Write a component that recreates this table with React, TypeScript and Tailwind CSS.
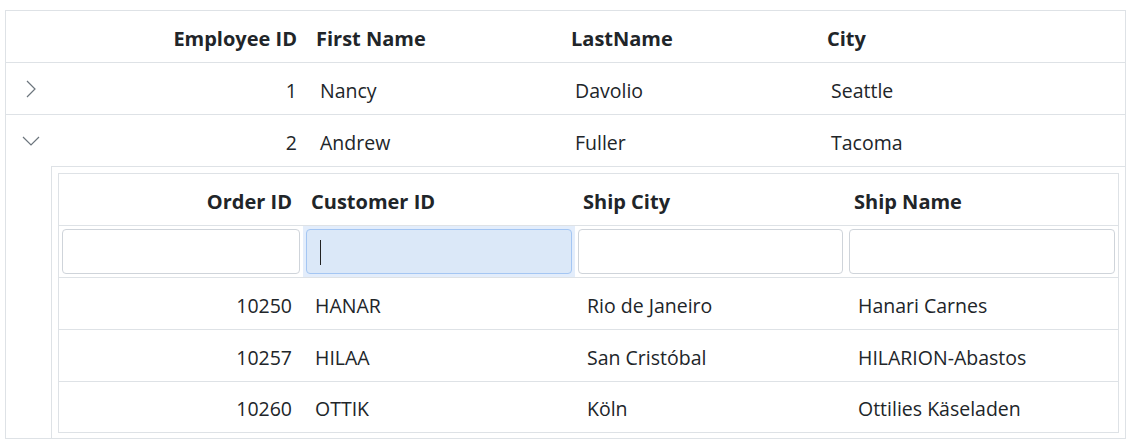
import { ReactNode } from 'react';

const employees = [
  { id: 1, first: 'Nancy', last: 'Davolio', city: 'Seattle', open: false },
  { id: 2, first: 'Andrew', last: 'Fuller', city: 'Tacoma', open: true },
];

const orders = [
  { id: 10250, customer: 'HANAR', city: 'Rio de Janeiro', name: 'Hanari Carnes' },
  { id: 10257, customer: 'HILAA', city: 'San Cristóbal', name: 'HILARION-Abastos' },
  { id: 10260, customer: 'OTTIK', city: 'Köln', name: 'Ottilies Käseladen' },
];

const outerCols = 'grid grid-cols-[45px_257px_255px_256px_1fr]';
const innerCols = 'grid grid-cols-[244px_272px_271px_1fr]';

function Chevron({ open }: { open: boolean }) {
  return open ? (
    <svg width="18" height="10" viewBox="0 0 18 10" className="text-[#6c757d]">
      <path d="M1 1 L9 9 L17 1" fill="none" stroke="currentColor" strokeWidth="1.2" />
    </svg>
  ) : (
    <svg width="10" height="18" viewBox="0 0 10 18" className="text-[#6c757d]">
      <path d="M1 1 L9 9 L1 17" fill="none" stroke="currentColor" strokeWidth="1.2" />
    </svg>
  );
}

function Head({ children, right }: { children: ReactNode; right?: boolean }) {
  return (
    <div className={`flex items-center pt-1 text-[20px] font-bold ${right ? 'justify-end pr-[11px]' : 'pl-2'}`}>
      {children}
    </div>
  );
}

function Cell({ children, right }: { children: ReactNode; right?: boolean }) {
  return (
    <div className={`flex items-center pt-1 ${right ? 'justify-end pr-[11px]' : 'pl-3'}`}>{children}</div>
  );
}

function FilterInput({ focused }: { focused?: boolean }) {
  return (
    <div className={`px-[3px] py-[3px] ${focused ? 'bg-[#e3edfb]' : ''}`}>
      <div
        className={`relative h-full rounded border ${
          focused ? 'bg-[#dbe8f8] border-[#a4c6f3]' : 'bg-white border-[#cfd4da]'
        }`}
      >
        {focused && <div className="absolute left-[13px] top-[10px] w-px h-[25px] bg-[#222]" />}
      </div>
    </div>
  );
}

export default function App() {
  return (
    <div
      className="pl-[5px] pt-[10px] pr-px text-[19.5px] text-[#212529] bg-white"
      style={{ fontFamily: '"Open Sans", "Noto Sans", sans-serif' }}
    >
      <div className="border border-[#dee2e6]">
        <div className={`${outerCols} h-[52px] border-b border-[#dee2e6]`}>
          <div />
          <Head right>Employee ID</Head>
          <Head>First Name</Head>
          <Head>LastName</Head>
          <Head>City</Head>
        </div>

        {employees.map((e, i) => (
          <div key={e.id}>
            <div className={`${outerCols} ${e.open ? 'h-[51px]' : 'h-[52px]'} ${i === 0 ? 'border-b border-[#dee2e6]' : ''}`}>
              <div className="flex items-center justify-center pl-[4px]">
                <Chevron open={e.open} />
              </div>
              <Cell right>{e.id}</Cell>
              <Cell>{e.first}</Cell>
              <Cell>{e.last}</Cell>
              <Cell>{e.city}</Cell>
            </div>
            {e.open && (
              <div className="flex">
                <div className="w-[45px] flex-shrink-0" />
                <div className="flex-1 border-l border-t border-[#dee2e6] pl-[6px] pr-[6px] pt-[6px] pb-[5px]">
                  <div className="border border-[#dee2e6]">
                    <div className={`${innerCols} h-[52px] border-b border-[#dee2e6]`}>
                      <Head right>Order ID</Head>
                      <Head>Customer ID</Head>
                      <Head>Ship City</Head>
                      <Head>Ship Name</Head>
                    </div>
                    <div className={`${innerCols} h-[52px] border-b border-[#dee2e6]`}>
                      <FilterInput />
                      <FilterInput focused />
                      <FilterInput />
                      <FilterInput />
                    </div>
                    {orders.map((o, j) => (
                      <div
                        key={o.id}
                        className={`${innerCols} ${j < orders.length - 1 ? 'h-[52px] border-b border-[#dee2e6]' : 'h-[50px]'}`}
                      >
                        <Cell right>{o.id}</Cell>
                        <Cell>{o.customer}</Cell>
                        <Cell>{o.city}</Cell>
                        <Cell>{o.name}</Cell>
                      </div>
                    ))}
                  </div>
                </div>
              </div>
            )}
          </div>
        ))}
      </div>
    </div>
  );
}
